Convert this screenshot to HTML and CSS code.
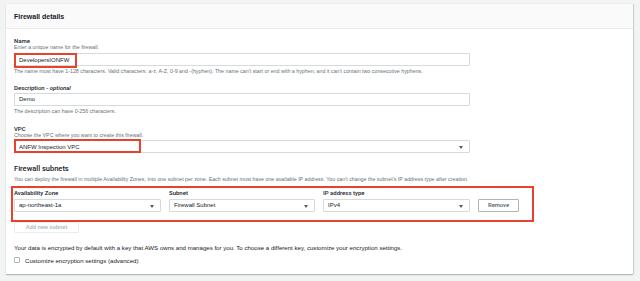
FILE: index.html
```html
<!DOCTYPE html>
<html>
<head>
<meta charset="utf-8">
<link rel="stylesheet" href="styles.css">
</head>
<body>
<div class="card">
  <div class="card-header">Firewall details</div>
  <div class="card-body">
    <div class="field first">
      <div class="label">Name</div>
      <div class="hint">Enter a unique name for the firewall.</div>
      <div class="control-wrap">
        <div class="input">DevelopersIONFW</div>
        <div class="mark mark-name"></div>
      </div>
      <div class="help">The name must have 1-128 characters. Valid characters: a-z, A-Z, 0-9 and -(hyphen). The name can't start or end with a hyphen, and it can't contain two consecutive hyphens.</div>
    </div>
    <div class="field">
      <div class="label">Description - <i>optional</i></div>
      <div class="control-wrap tight">
        <div class="input">Demo</div>
      </div>
      <div class="help">The description can have 0-256 characters.</div>
    </div>
    <div class="field vpc">
      <div class="label">VPC</div>
      <div class="hint">Choose the VPC where you want to create this firewall.</div>
      <div class="control-wrap tight">
        <div class="input select">ANFW Inspection VPC<span class="caret"></span></div>
        <div class="mark mark-vpc"></div>
      </div>
    </div>
    <div class="section-title">Firewall subnets</div>
    <div class="section-desc">You can deploy the firewall in multiple Availability Zones, into one subnet per zone. Each subnet must have one available IP address. You can't change the subnet's IP address type after creation.</div>
    <div class="subnet-row">
      <div class="col">
        <div class="label">Availability Zone</div>
        <div class="input select">ap-northeast-1a<span class="caret"></span></div>
      </div>
      <div class="col">
        <div class="label">Subnet</div>
        <div class="input select">Firewall Subnet<span class="caret"></span></div>
      </div>
      <div class="col">
        <div class="label">IP address type</div>
        <div class="input select">IPv4<span class="caret"></span></div>
      </div>
      <div class="btn-col">
        <div class="btn">Remove</div>
      </div>
      <div class="mark mark-row"></div>
    </div>
    <div class="btn disabled">Add new subnet</div>
    <div class="enc">Your data is encrypted by default with a key that AWS owns and manages for you. To choose a different key, customize your encryption settings.</div>
    <div class="check-row">
      <span class="checkbox"></span>
      <span class="check-label">Customize encryption settings (advanced)</span>
    </div>
  </div>
</div>
</body>
</html>
```
FILE: styles.css
```css
html, body {
  margin: 0;
  padding: 0;
}
body {
  background: #f2f3f3;
  font-family: "Liberation Sans", Arial, sans-serif;
  color: #16191f;
  width: 640px;
  height: 281px;
  overflow: hidden;
}
.card {
  margin: 4px 7px 0 6px;
  height: 270px;
  background: #ffffff;
  box-shadow: 0 1px 1px rgba(0, 28, 36, 0.25), 1px 0 1px rgba(0, 28, 36, 0.12);
}
.card-header {
  height: 25px;
  box-sizing: border-box;
  padding-left: 8px;
  display: flex;
  align-items: center;
  background: #fafafa;
  border-bottom: 1px solid #eaeded;
  font-size: 7px;
  font-weight: bold;
}
.card-body {
  padding: 8px 8px 0 8px;
}
.field {
  margin-top: 9px;
  width: 456px;
}
.field.first {
  margin-top: 0;
}
.field.vpc {
  margin-top: 10px;
}
.label {
  font-family: Roboto, "Liberation Sans", sans-serif;
  font-size: 6px;
  line-height: 7px;
  font-weight: 500;
  color: #16191f;
}
.label i {
  font-weight: 500;
}
.hint {
  font-size: 5.3px;
  line-height: 7px;
  color: #687078;
  white-space: nowrap;
}
.help {
  font-size: 5.3px;
  line-height: 7px;
  color: #687078;
  margin-top: 2px;
  white-space: nowrap;
}
.control-wrap {
  position: relative;
  margin-top: 2px;
}
.control-wrap.tight {
  margin-top: 1.5px;
}
.input {
  height: 13px;
  box-sizing: border-box;
  border: 1px solid #d5dbdb;
  border-radius: 1px;
  padding-left: 4px;
  font-size: 6px;
  display: flex;
  align-items: center;
  position: relative;
  color: #16191f;
}
.select {
  padding-right: 12px;
}
.caret {
  position: absolute;
  right: 6px;
  top: 5px;
  width: 0;
  height: 0;
  border-left: 2.5px solid transparent;
  border-right: 2.5px solid transparent;
  border-top: 3px solid #545b64;
}
.mark {
  position: absolute;
  border: 2px solid #e8422c;
  box-sizing: border-box;
  pointer-events: none;
}
.mark-name {
  left: 0;
  top: 0;
  width: 63px;
  height: 15px;
}
.mark-vpc {
  left: 0;
  top: -1px;
  width: 127px;
  height: 14px;
}
.section-title {
  margin-top: 11px;
  font-family: Roboto, "Liberation Sans", sans-serif;
  font-size: 7.5px;
  line-height: 9px;
  font-weight: 500;
}
.section-desc {
  margin-top: 3px;
  font-size: 5.3px;
  line-height: 7px;
  color: #687078;
  white-space: nowrap;
}
.subnet-row {
  position: relative;
  margin-top: 6px;
  display: grid;
  grid-template-columns: 147px 146px 147px 41px;
  column-gap: 8px;
  padding-bottom: 9px;
}
.col .input {
  margin-top: 2.5px;
}
.btn-col {
  display: flex;
  align-items: flex-end;
}
.btn {
  height: 13px;
  box-sizing: border-box;
  border: 1px solid #aab7b8;
  border-radius: 1px;
  display: flex;
  align-items: center;
  justify-content: center;
  font-family: Roboto, "Liberation Sans", sans-serif;
  font-size: 5.8px;
  font-weight: 500;
  color: #545b64;
  width: 41px;
}
.mark-row {
  left: -3px;
  top: -3px;
  width: 523px;
  height: 36px;
}
.btn.disabled {
  width: 65px;
  height: 11px;
  margin-top: 1px;
  border-color: #eaeded;
  color: #aab7b8;
}
.enc {
  margin-top: 11px;
  font-size: 6.1px;
  line-height: 7px;
  white-space: nowrap;
}
.check-row {
  margin-top: 6px;
  display: flex;
  align-items: center;
  height: 7px;
}
.checkbox {
  width: 6px;
  height: 6px;
  box-sizing: border-box;
  border: 1px solid #aab7b8;
  border-radius: 1px;
  margin-right: 5px;
}
.check-label {
  font-size: 6.1px;
  line-height: 7px;
}
```
